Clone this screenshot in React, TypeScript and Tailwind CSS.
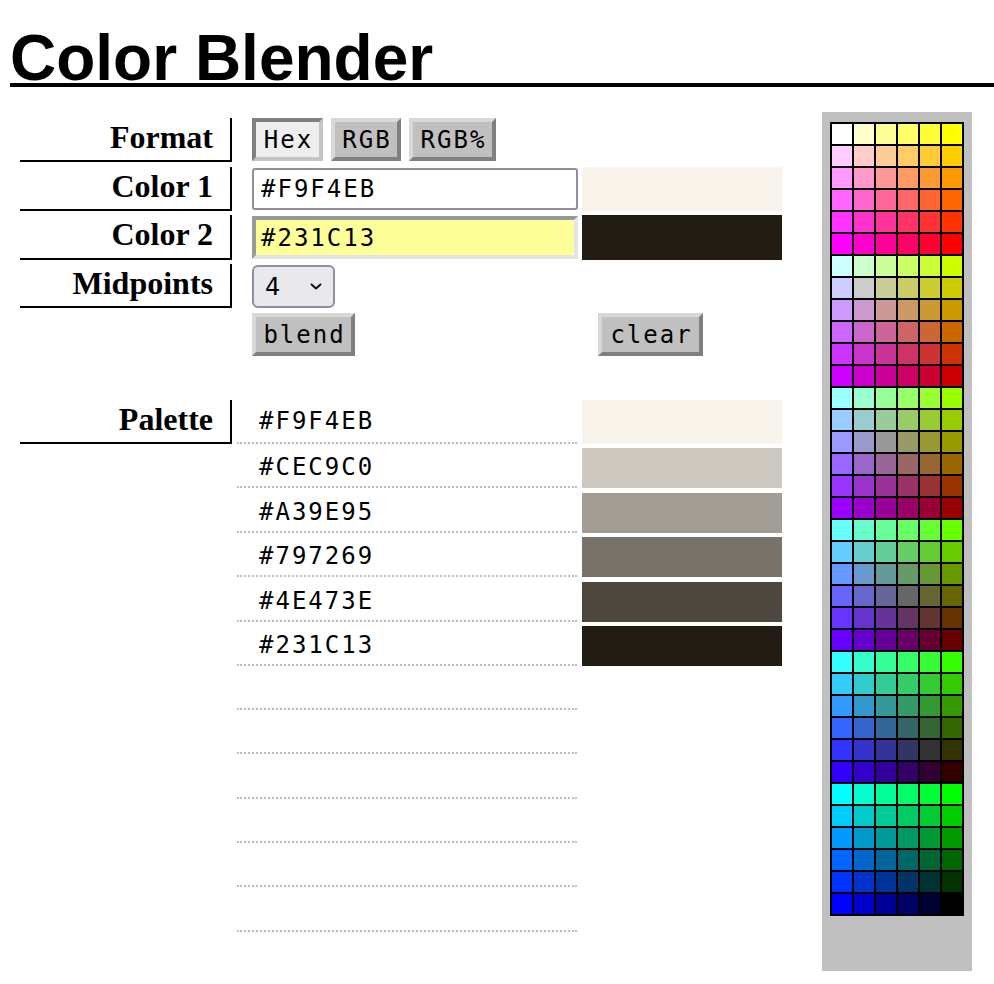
import type { ReactNode } from "react";

const steps = ["FF", "CC", "99", "66", "33", "00"];
const webColors: string[] = [];
for (const r of steps) for (const g of steps) for (const b of steps) webColors.push(`#${r}${g}${b}`);

const palette = ["#F9F4EB", "#CEC9C0", "#A39E95", "#797269", "#4E473E", "#231C13"];
const emptyRows = 6;
// gaps between palette rows, so the dotted lines land where the original ones do
const rowGaps = ["mt-[4px]", "mt-[5px]", "mt-[4px]", "mt-[5px]", "mt-[4px]", "mt-[4px]", "mt-[4px]", "mt-[5px]", "mt-[4px]", "mt-[4px]", "mt-[5px]", "mt-[4px]"];

const mono = "font-['DejaVu_Sans_Mono',monospace] text-[24px] tracking-[2px]";
const row = "grid grid-cols-[212px_340px_200px] gap-x-[5px]";

function Label({ children }: { children?: ReactNode }) {
  return (
    <div className="border-r-2 border-b-2 border-black pr-[17px] pt-[1px] text-right font-['Liberation_Serif',serif] text-[32px] font-bold leading-[36px] text-black">
      {children}
    </div>
  );
}

function Btn({ label, pressed, w }: { label: string; pressed?: boolean; w: string }) {
  return (
    <button
      className={`${w} h-[43px] border-4 ${
        pressed
          ? "border-t-[#808080] border-l-[#808080] border-b-[#c4c4c4] border-r-[#c4c4c4] bg-[#eeeeee]"
          : "border-t-[#d8d8d8] border-l-[#d8d8d8] border-b-[#808080] border-r-[#808080] bg-[#c0c0c0]"
      } flex items-center justify-center pl-[2px] text-black ${mono}`}
    >
      {label}
    </button>
  );
}

export default function App() {
  return (
    <div className="min-h-[984px] bg-white text-black">
      <h1 className="ml-[10px] mt-[33px] border-b-4 border-black font-['Liberation_Sans',Arial,sans-serif] text-[64px] font-bold leading-[50px]">
        Color Blender
      </h1>

      <div className="flex items-start">
        <div className="ml-[20px] mt-[31px] flex w-[762px] flex-col">
          <div className={`${row} h-[44px]`}>
            <Label>Format</Label>
            <div className="flex gap-[8px] pl-[15px]">
              <Btn label="Hex" pressed w="w-[71px]" />
              <Btn label="RGB" w="w-[70px]" />
              <Btn label="RGB%" w="w-[87px]" />
            </div>
            <div />
          </div>

          <div className={`${row} mt-[5px] h-[44px]`}>
            <Label>Color 1</Label>
            <div className="pl-[15px] pt-[1px]">
              <input
                readOnly
                value="#F9F4EB"
                className={`h-[42px] w-[326px] rounded-[3px] border-2 border-[#8f8f9d] bg-white pl-[7px] outline-none ${mono}`}
              />
            </div>
            <div className="bg-[#F9F4EB]" />
          </div>

          <div className={`${row} mt-[4px] h-[45px]`}>
            <Label>Color 2</Label>
            <div className="pl-[15px] pt-[1px]">
              <input
                readOnly
                value="#231C13"
                className={`h-[43px] w-[326px] border-4 border-t-[#999999] border-l-[#999999] border-b-[#e4e4e4] border-r-[#e4e4e4] bg-[#ffff99] pl-[5px] outline-none ${mono}`}
              />
            </div>
            <div className="bg-[#231C13]" />
          </div>

          <div className={`${row} mt-[4px] h-[44px]`}>
            <Label>Midpoints</Label>
            <div className="pl-[15px] pt-[1px]">
              <div className="flex h-[43px] w-[83px] items-center justify-between rounded-[6px] border-2 border-[#8f8f9d] bg-[#e9e9ed] pl-[11px] pr-[10px]">
                <span className="font-['DejaVu_Sans',sans-serif] text-[24px]">4</span>
                <svg width="14" height="9" viewBox="0 0 14 9" fill="none" stroke="#111" strokeWidth="2" strokeLinecap="round" strokeLinejoin="round">
                  <polyline points="2.5,2.5 7,6.5 11.5,2.5" />
                </svg>
              </div>
            </div>
            <div />
          </div>

          <div className={`${row} mt-[5px] h-[43px]`}>
            <div />
            <div className="pl-[15px]">
              <Btn label="blend" w="w-[103px]" />
            </div>
            <div className="pl-[16px]">
              <Btn label="clear" w="w-[105px]" />
            </div>
          </div>

          <div className={`${row} mt-[44px] h-[44px]`}>
            <Label>Palette</Label>
            <div className={`flex items-center border-b-2 border-dotted border-[#bdbdbd] pl-[22px] ${mono}`}>{palette[0]}</div>
            <div style={{ background: palette[0] }} />
          </div>

          {palette.slice(1).map((hex, i) => (
            <div key={hex} className={`${row} ${rowGaps[i]} h-[40px]`}>
              <div />
              <div className={`flex items-center border-b-2 border-dotted border-[#bdbdbd] pl-[22px] ${mono}`}>{hex}</div>
              <div style={{ background: hex }} />
            </div>
          ))}

          {Array.from({ length: emptyRows }).map((_, i) => (
            <div key={i} className={`${row} ${rowGaps[i + 5]} h-[40px]`}>
              <div />
              <div className="border-b-2 border-dotted border-[#bdbdbd]" />
              <div />
            </div>
          ))}
        </div>

        <div className="ml-[40px] mt-[25px] h-[859px] w-[150px] bg-[#c0c0c0] pl-[8px] pt-[10px]">
          <div className="grid w-[134px] grid-cols-6 gap-[2px] bg-black p-[2px]">
            {webColors.map((c) => (
              <div key={c} className="h-[20px]" style={{ background: c }} />
            ))}
          </div>
        </div>
      </div>
    </div>
  );
}
